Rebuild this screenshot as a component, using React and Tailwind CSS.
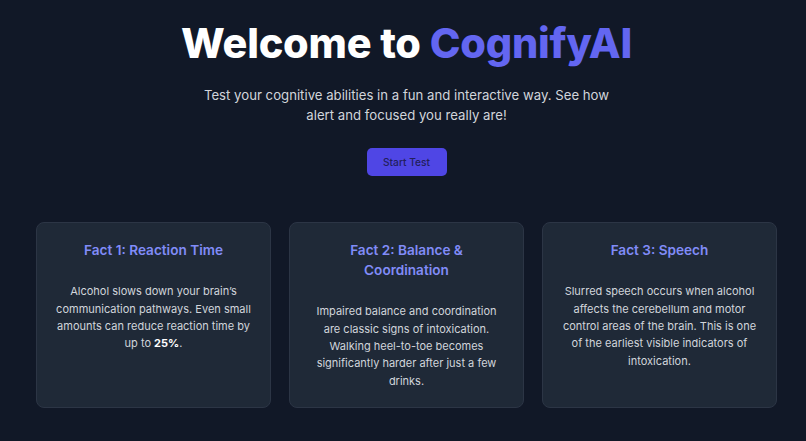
import React from "react";

const facts = [
  {
    title: "Fact 1: Reaction Time",
    body: (
      <>
        Alcohol slows down your brain’s communication pathways. Even small amounts can reduce reaction time by up to{" "}
        <strong className="font-bold text-white">25%</strong>.
      </>
    ),
  },
  {
    title: "Fact 2: Balance & Coordination",
    body: (
      <>
        Impaired balance and coordination are classic signs of intoxication. Walking heel-to-toe becomes significantly harder after just a few drinks.
      </>
    ),
  },
  {
    title: "Fact 3: Speech",
    body: (
      <>
        Slurred speech occurs when alcohol affects the cerebellum and motor control areas of the brain. This is one of the earliest visible indicators of intoxication.
      </>
    ),
  },
];

export default function App() {
  return (
    <div
      className="min-h-screen w-full bg-[#111827] flex flex-col items-center"
      style={{ fontFamily: "Inter, 'Noto Sans', sans-serif" }}
    >
      <h1 className="mt-[23px] text-[41.4px] leading-none font-extrabold tracking-[-0.005em] text-white pl-[7px]">
        Welcome to <span className="text-[#6366f1]">CognifyAI</span>
      </h1>
      <p className="mt-[21px] w-[418px] pl-[7px] text-center text-[13.2px] leading-[20px] text-[#d1d5db]">
        Test your cognitive abilities in a fun and interactive way. See how alert and focused you really are!
      </p>
      <button className="mt-[23px] ml-[7px] h-[28px] w-[80px] rounded-[5px] bg-[#4f46e5] text-[10.2px] font-medium text-[#231f5c]">
        Start Test
      </button>
      <div className="mt-[46px] w-full pl-[36px] pr-[29px] grid grid-cols-3 gap-[18px]">
        {facts.map((f) => (
          <div
            key={f.title}
            className="rounded-[8px] border border-[#2c3545] bg-[#1f2937] px-[19px] pt-[17px] pb-[17px] text-center"
          >
            <h2 className="text-[13.6px] leading-[20px] font-semibold text-[#818cf8]">{f.title}</h2>
            <p className="mt-[23px] text-[11px] leading-[17.3px] text-[#d1d5db]">{f.body}</p>
          </div>
        ))}
      </div>
    </div>
  );
}
